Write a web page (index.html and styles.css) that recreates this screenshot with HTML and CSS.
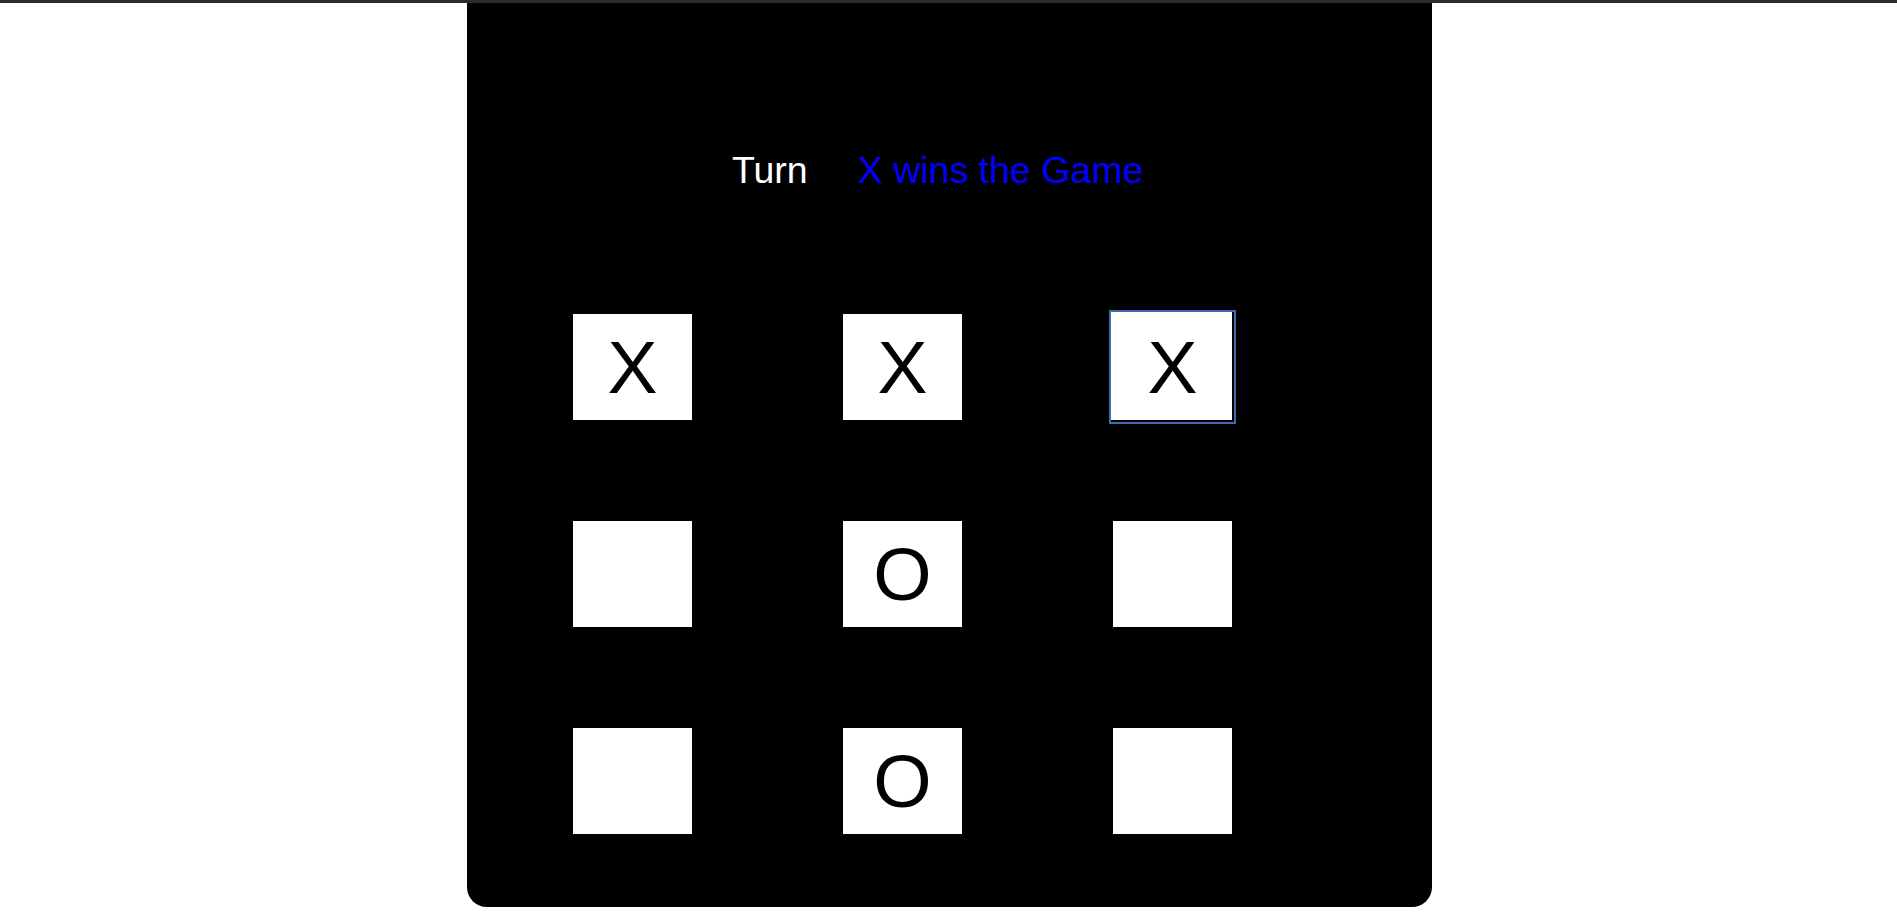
FILE: index.html
```html
<!DOCTYPE html>
<html lang="en">
<head>
<meta charset="utf-8">
<title>Tic Tac Toe</title>
<link rel="stylesheet" href="styles.css">
</head>
<body>
<div class="topbar"></div>
<main class="game">
  <div class="status">
    <span class="turn">Turn</span>
    <span class="result">X wins the Game</span>
  </div>
  <div class="board">
    <button class="cell">X</button>
    <button class="cell">X</button>
    <button class="cell focused">X</button>
    <button class="cell"></button>
    <button class="cell">O</button>
    <button class="cell"></button>
    <button class="cell"></button>
    <button class="cell">O</button>
    <button class="cell"></button>
  </div>
</main>
</body>
</html>
```

FILE: styles.css
```css
html, body {
  margin: 0;
  padding: 0;
  background: #ffffff;
  font-family: "Liberation Sans", Arial, sans-serif;
}

.topbar {
  height: 3px;
  background: #2b2b2b;
}

.game {
  width: 965px;
  height: 904px;
  box-sizing: border-box;
  margin: 0 0 0 467px;
  background: #000000;
  border-radius: 0 0 20px 20px;
  padding: 146px 0 0 106px;
}

.status {
  display: flex;
  align-items: baseline;
  gap: 50px;
  padding-left: 159px;
  font-size: 37.5px;
  line-height: 42px;
}

.turn {
  color: #ffffff;
}

.result {
  color: #0000ff;
}

.board {
  margin-top: 123px;
  display: grid;
  grid-template-columns: repeat(3, 119px);
  grid-auto-rows: 106px;
  column-gap: 151px;
  row-gap: 101px;
}

.cell {
  border: none;
  padding: 0;
  margin: 0;
  background: #ffffff;
  color: #000000;
  font-family: "Liberation Sans", Arial, sans-serif;
  font-size: 75px;
  line-height: 106px;
  text-align: center;
}

.cell.focused {
  box-shadow: -1px -1px 0 1px #ffffff;
  outline: 2px solid #3c6cb4;
  outline-offset: 2px;
}
```
